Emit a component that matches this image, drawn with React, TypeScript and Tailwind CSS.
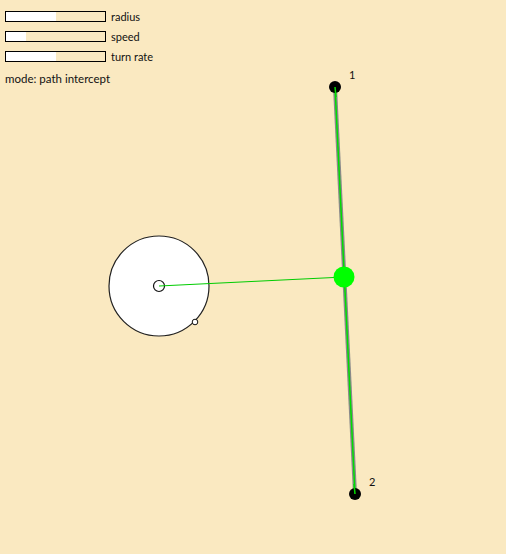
import { useState } from 'react';

const SLIDERS = [
  { label: 'radius', value: 0.5 },
  { label: 'speed', value: 0.2 },
  { label: 'turn rate', value: 0.5 },
];

const P1 = { x: 335, y: 87 };
const P2 = { x: 355, y: 494 };
const ORBIT = { x: 159, y: 286, r: 50 };
const INTERCEPT = { x: 344, y: 277 };

function Slider({ label, value }: { label: string; value: number }) {
  return (
    <div className="flex h-[11px] items-center gap-[5px]">
      <div className="h-[11px] w-[101px] border border-black">
        <div className="h-full bg-white" style={{ width: `${value * 100}%` }} />
      </div>
      <span className="text-[11px] leading-none text-[#111]">{label}</span>
    </div>
  );
}

export default function App() {
  const [sliders] = useState(SLIDERS);

  return (
    <div className="relative h-[554px] w-[506px] overflow-hidden bg-[#fae9c1] font-['Lato',sans-serif]">
      <svg className="absolute inset-0" width={506} height={554} viewBox="0 0 506 554">
        <line x1={P1.x} y1={P1.y} x2={P2.x} y2={P2.y} stroke="#8a8a8a" strokeWidth={4} />
        <line x1={P1.x} y1={P1.y} x2={P2.x} y2={P2.y} stroke="#00dd00" strokeWidth={1.5} />
        <circle cx={ORBIT.x} cy={ORBIT.y} r={ORBIT.r} fill="#fff" stroke="#222" strokeWidth={1.2} />
        <circle cx={ORBIT.x} cy={ORBIT.y} r={5.5} fill="none" stroke="#111" strokeWidth={1.2} />
        <circle cx={195} cy={322} r={2.8} fill="#fff" stroke="#111" strokeWidth={1} />
        <line x1={ORBIT.x} y1={ORBIT.y} x2={INTERCEPT.x} y2={INTERCEPT.y} stroke="#00cc00" strokeWidth={1} />
        <circle cx={P1.x} cy={P1.y} r={6} fill="#000" />
        <circle cx={P2.x} cy={P2.y} r={6} fill="#000" />
        <line x1={P1.x} y1={P1.y} x2={P1.x + 1} y2={P1.y + 10} stroke="#00dd00" strokeWidth={1.5} />
        <line x1={P2.x - 1} y1={P2.y - 10} x2={P2.x} y2={P2.y} stroke="#00dd00" strokeWidth={1.5} />
        <circle cx={INTERCEPT.x} cy={INTERCEPT.y} r={10.5} fill="#00ff00" />
        <text x={349} y={79} fontSize={11} fill="#111" fontFamily="Lato, sans-serif">1</text>
        <text x={369} y={486} fontSize={11} fill="#111" fontFamily="Lato, sans-serif">2</text>
      </svg>

      <div className="relative flex flex-col gap-[9px] pl-[5px] pt-[11px]">
        {sliders.map((s) => (
          <Slider key={s.label} label={s.label} value={s.value} />
        ))}
        <div className="mt-[1px] text-[11.5px] leading-[13px] text-[#111]">mode: path intercept</div>
      </div>
    </div>
  );
}
